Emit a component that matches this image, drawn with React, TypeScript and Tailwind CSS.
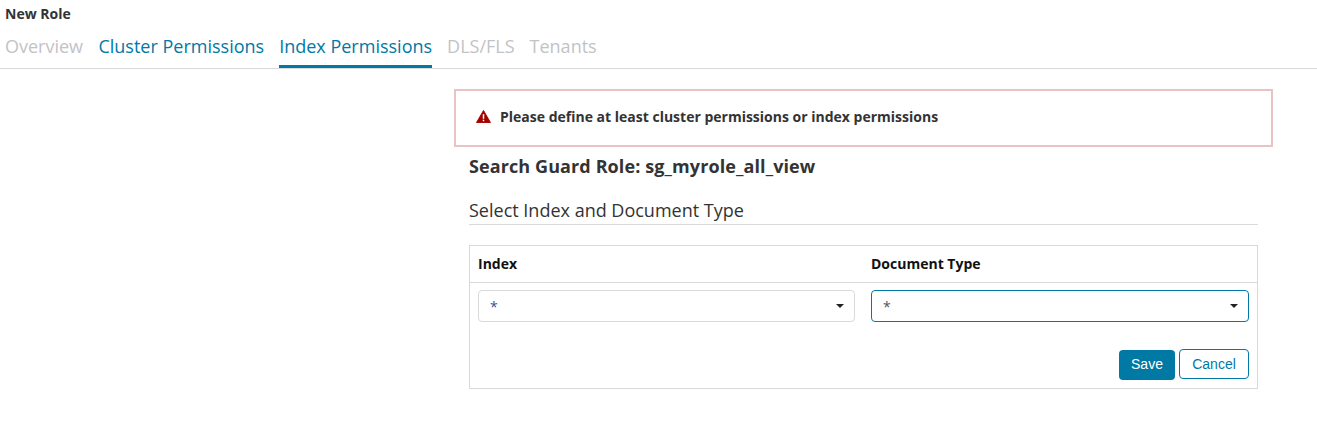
const font = "font-['Open_Sans',sans-serif]";

function Caret() {
  return <span className="w-0 h-0 border-x-[4px] border-x-transparent border-t-[4px] border-t-[#222]" />;
}

function Select({ active, textColor, width }: { active?: boolean; textColor: string; width: string }) {
  return (
    <div className={`${width} h-[32px] flex items-center justify-between pl-[11px] pr-[10px] rounded-[4px] border ${active ? "border-[#0079a5]" : "border-[#d9d9d9]"}`}>
      <span className={`text-[14px] ${textColor}`}>*</span>
      <Caret />
    </div>
  );
}

export default function App() {
  return (
    <div className={`w-[1317px] h-[422px] bg-white overflow-hidden ${font} text-[#333]`}>
      <div className="border-b border-[#d9d9d9] h-[69px]">
        <div className="pl-[5px] pt-[5px] text-[14px] leading-[18px] font-bold text-[#333]">New Role</div>
        <div className="flex pl-[5px] gap-[15px] mt-[3px] text-[18px] leading-[24px]">
          <span className="text-[#c2c3c6] h-[42px] pt-[8px] mr-[0.4px]">Overview</span>
          <span className="text-[#0079a5] h-[42px] pt-[8px]">Cluster Permissions</span>
          <span className="text-[#0079a5] h-[42px] pt-[8px] border-b-[3px] border-[#0079a5]">Index Permissions</span>
          <span className="text-[#c2c3c6] h-[42px] pt-[8px]">DLS/FLS</span>
          <span className="text-[#c2c3c6] h-[42px] pt-[8px]">Tenants</span>
        </div>
      </div>
      <div className="ml-[454px] w-[819px] mt-[20px]">
        <div className="h-[58px] border-2 border-[#e8c3c3] flex items-center pl-[20px] pb-[4px] gap-[9px] text-[14px] font-bold text-[#333]">
          <svg width="15" height="13" viewBox="0 0 16 14">
            <path d="M8 0.5 L15.5 13.5 L0.5 13.5 Z" fill="#a30000" stroke="#a30000" strokeLinejoin="round" />
            <rect x="7.2" y="4.5" width="1.6" height="5" fill="#fff" />
            <rect x="7.2" y="10.5" width="1.6" height="1.6" fill="#fff" />
          </svg>
          Please define at least cluster permissions or index permissions
        </div>
        <div className="ml-[15px] w-[789px]">
          <div className="mt-[7px] text-[18px] leading-[24px] font-bold tracking-[0.1px]">Search Guard Role: sg_myrole_all_view</div>
          <div className="mt-[20px] text-[18px] leading-[24px] border-b border-[#d9d9d9] h-[27px]">Select Index and Document Type</div>
          <div className="mt-[20px] border border-[#d9d9d9] h-[144px]">
            <div className="flex h-[37px] items-center pb-[2px] text-[14px] font-bold text-[#111] border-b border-[#d9d9d9]">
              <span className="pl-[8px] w-[401px]">Index</span>
              <span>Document Type</span>
            </div>
            <div className="flex gap-[16px] px-[8px] pt-[7px]">
              <Select width="w-[377px]" textColor="text-[#34558b]" />
              <Select width="w-[378px]" active textColor="text-[#555]" />
            </div>
            <div className="flex justify-end items-start gap-[4px] px-[8px] pt-[27px] font-['Liberation_Sans',sans-serif] text-[14px]">
              <button className="w-[56px] h-[30px] mt-[1px] pb-[2px] rounded-[4px] bg-[#0079a5] text-white">Save</button>
              <button className="w-[70px] h-[30px] rounded-[4px] border border-[#0079a5] text-[#0079a5]">Cancel</button>
            </div>
          </div>
        </div>
      </div>
    </div>
  );
}
